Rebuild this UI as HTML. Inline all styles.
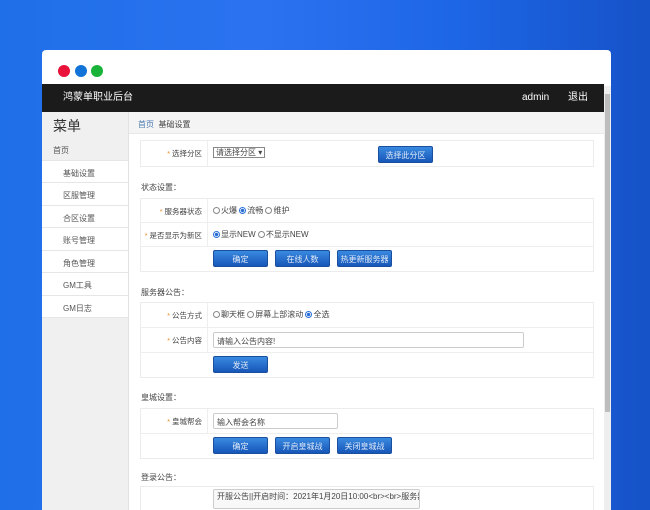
<!DOCTYPE html><html><head><meta charset="utf-8"><style>
*{margin:0;padding:0;box-sizing:border-box}
body{width:650px;height:500px;overflow:hidden;background:linear-gradient(90deg,#1f6fe8 0%,#2b72f0 40%,#1d66e6 70%,#1652c8 100%);font-family:"Liberation Sans","Noto Sans CJK SC",sans-serif;font-size:8px;color:#444;position:relative}
.win{position:absolute;left:42px;top:50px;width:569px;height:460px;background:#fff;border-radius:4px 4px 0 0;overflow:hidden}
.dot{position:absolute;top:15px;width:12px;height:12px;border-radius:50%}
.hdr{position:absolute;left:0;top:34px;width:562px;height:28px;background:#1b1b1b;color:#fff}
.hdr span{position:absolute;top:0;line-height:28px;font-size:10px}
.side{position:absolute;left:0;top:62px;width:87px;height:400px;background:#f0f0f0;border-right:1px solid #e2e2e2}
.side .t{height:26px;font-size:14px;padding:4px 0 0 11px;color:#333}
.side .i{height:22.5px;background:#fff;border-bottom:1px solid #e6e6e6;padding:7px 0 0 21px;font-size:8px;color:#555}
.side .h{background:#f0f0f0;padding-left:11px}
.bc{position:absolute;left:87px;top:62px;width:475px;height:22px;background:#f4f4f4;border-bottom:1px solid #e8e8e8;padding:7px 0 0 9px}
.bc b{font-weight:normal;color:#4a7ab0}
.sb{position:absolute;left:562px;top:36px;width:7px;height:430px;background:#eee}
.sb i{position:absolute;left:1px;top:8px;width:5px;height:318px;background:#bdbdbd}
.c{position:absolute;left:98px;top:0}
.tb{position:absolute;left:0;width:454px;border:1px solid #ececec}
.r{position:relative;height:24px;border-bottom:1px solid #eee}
.r:last-child{border-bottom:none}
.lb{position:absolute;left:0;top:0;width:67px;height:100%;border-right:1px solid #eee;text-align:right;padding:7px 5px 0 0;white-space:nowrap;font-size:7.5px}
.lb:before{content:"*";color:#e8902a;margin-right:2px}
.v{position:absolute;left:72px;top:6px;white-space:nowrap}
.sec{position:absolute;left:1px;font-size:8px;white-space:nowrap}
.btn{position:absolute;height:17px;width:55px;border-radius:2px;background:linear-gradient(#3a8ae0,#1656b8);color:#dfe9f8;text-align:center;line-height:17px;font-size:8px;border:1px solid #1a4f9e;white-space:nowrap}
.rd{display:inline-block;width:7px;height:7px;border-radius:50%;border:1px solid #888;vertical-align:-1px;margin-right:1px;background:#fff}
.rd.on{background:radial-gradient(#2a6fd6 45%,#fff 55%);border-color:#2a6fd6}
.inp{position:absolute;border:1px solid #ccc;height:16px;padding:3px 3px;border-radius:2px;background:#fff;white-space:nowrap;overflow:hidden}
</style></head><body>
<div class="win">
<div class="dot" style="left:16px;background:#e8123a"></div>
<div class="dot" style="left:33px;background:#1173d8"></div>
<div class="dot" style="left:49px;background:#19b33a"></div>
<div class="hdr"><span style="left:21px">鸿蒙单职业后台</span><span style="left:480px">admin</span><span style="left:526px">退出</span></div>
<div class="side"><div class="t">菜单</div>
<div class="i h">首页</div><div class="i">基础设置</div><div class="i">区服管理</div><div class="i">合区设置</div><div class="i">账号管理</div><div class="i">角色管理</div><div class="i">GM工具</div><div class="i">GM日志</div></div>
<div class="bc"><b>首页</b>&nbsp; 基础设置</div>
<div class="sb"><i></i></div>
<div class="c">
<div class="tb" style="top:90px"><div class="r" style="height:25px"><div class="lb">选择分区</div><div class="v" style="top:6px"><span style="border:1px solid #888;padding:0 2px;background:#fff">请选择分区 ▾</span></div><div class="btn" style="left:237px;top:5px">选择此分区</div></div></div>
<div class="sec" style="top:132px">状态设置：</div>
<div class="tb" style="top:148px">
<div class="r"><div class="lb">服务器状态</div><div class="v"><span class="rd"></span>火爆 <span class="rd on"></span>流畅 <span class="rd"></span>维护</div></div>
<div class="r"><div class="lb">是否显示为新区</div><div class="v"><span class="rd on"></span>显示NEW <span class="rd"></span>不显示NEW</div></div>
<div class="r"><div class="lb" style="visibility:hidden"></div><div class="btn" style="left:72px;top:3px">确定</div><div class="btn" style="left:134px;top:3px">在线人数</div><div class="btn" style="left:196px;top:3px">热更新服务器</div></div>
</div>
<div class="sec" style="top:237px">服务器公告：</div>
<div class="tb" style="top:252px">
<div class="r" style="height:25px"><div class="lb">公告方式</div><div class="v"><span class="rd"></span>聊天框 <span class="rd"></span>屏幕上部滚动 <span class="rd on"></span>全选</div></div>
<div class="r" style="height:25px"><div class="lb">公告内容</div><div class="inp" style="left:72px;top:4px;width:311px">请输入公告内容!</div></div>
<div class="r"><div class="lb" style="visibility:hidden"></div><div class="btn" style="left:72px;top:3px">发送</div></div>
</div>
<div class="sec" style="top:342px">皇城设置：</div>
<div class="tb" style="top:358px">
<div class="r" style="height:25px"><div class="lb">皇城帮会</div><div class="inp" style="left:72px;top:4px;width:125px">输入帮会名称</div></div>
<div class="r"><div class="lb" style="visibility:hidden"></div><div class="btn" style="left:72px;top:3px">确定</div><div class="btn" style="left:134px;top:3px">开启皇城战</div><div class="btn" style="left:196px;top:3px">关闭皇城战</div></div>
</div>
<div class="sec" style="top:422px">登录公告：</div>
<div class="tb" style="top:436px"><div class="r" style="height:30px"><div class="lb" style="visibility:hidden"></div><div class="inp" style="left:72px;top:2px;width:207px;height:20px;padding:1px 3px;background:#f8f8f8">开服公告||开启时间：2021年1月20日10:00&lt;br&gt;&lt;br&gt;服务器：鸿蒙至</div></div></div>
</div>
</div>
</body></html>
